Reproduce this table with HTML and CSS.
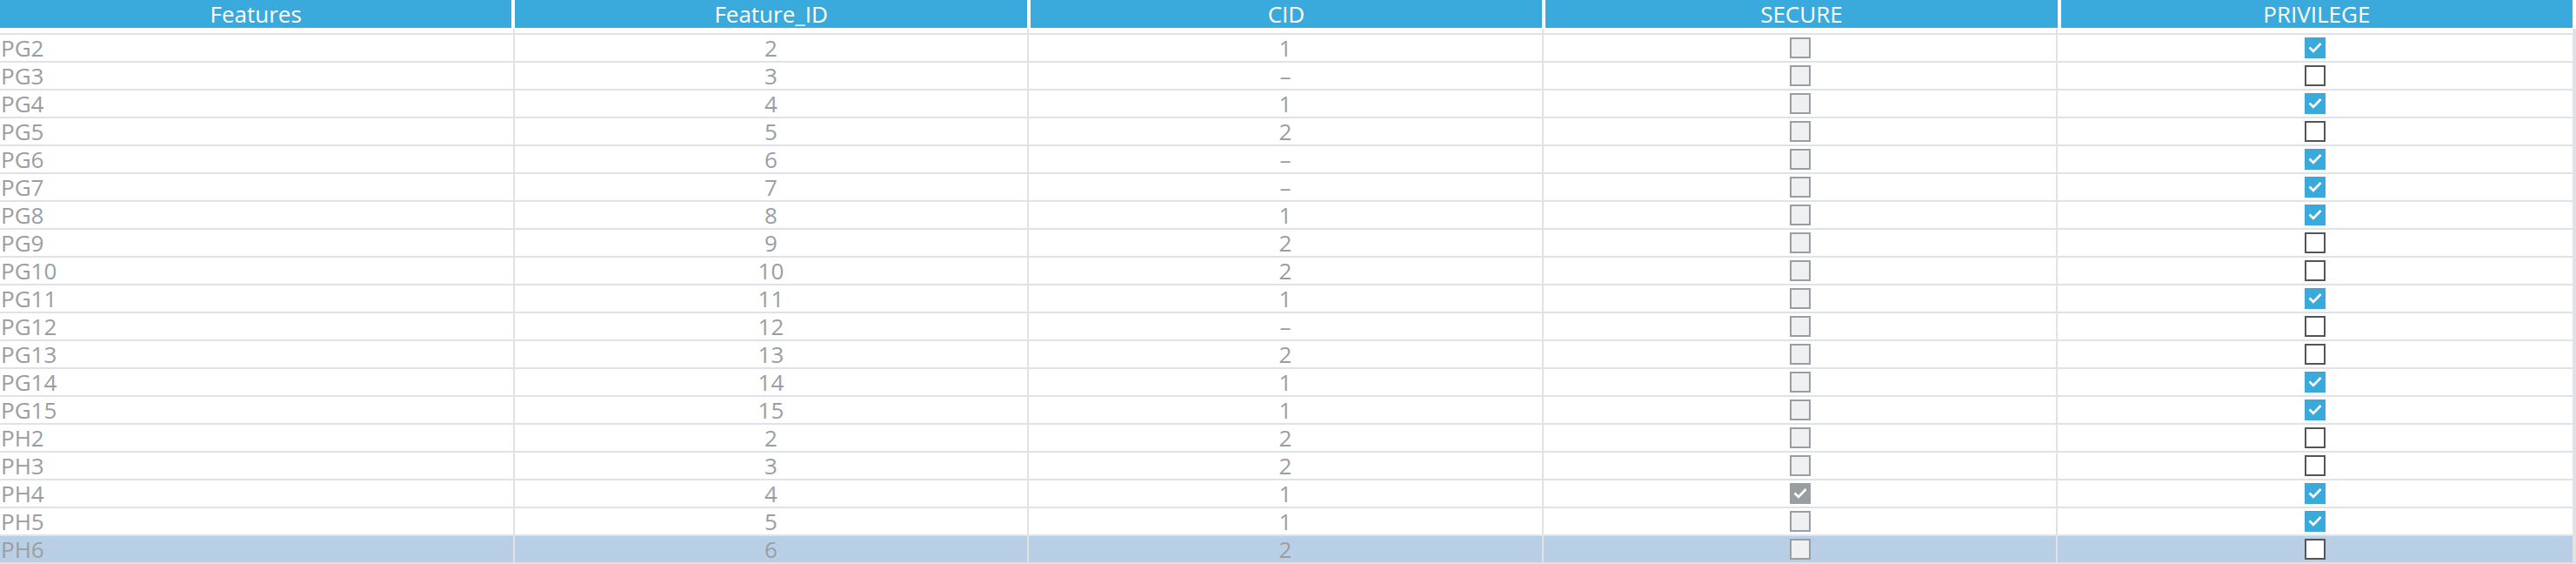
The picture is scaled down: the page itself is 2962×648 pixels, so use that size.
FILE: index.html
```html
<!DOCTYPE html>
<html>
<head>
<meta charset="utf-8">
<link rel="stylesheet" href="styles.css">
</head>
<body>
<div class="grid">
  <div class="head">
    <div class="hcell">Features</div>
    <div class="hcell">Feature_ID</div>
    <div class="hcell">CID</div>
    <div class="hcell">SECURE</div>
    <div class="hcell">PRIVILEGE</div>
  </div>
  <div class="body">
    <div class="row spacer"><div class="cell"></div><div class="cell"></div><div class="cell"></div><div class="cell"></div><div class="cell"></div></div>
    <div class="rows" id="rows"></div>
  </div>
</div>
<script src="app.js"></script>
</body>
</html>
```
FILE: app.js
```js
const data = [
  ["PG2","2","1",0,1],["PG3","3","–",0,0],["PG4","4","1",0,1],["PG5","5","2",0,0],
  ["PG6","6","–",0,1],["PG7","7","–",0,1],["PG8","8","1",0,1],["PG9","9","2",0,0],
  ["PG10","10","2",0,0],["PG11","11","1",0,1],["PG12","12","–",0,0],["PG13","13","2",0,0],
  ["PG14","14","1",0,1],["PG15","15","1",0,1],["PH2","2","2",0,0],["PH3","3","2",0,0],
  ["PH4","4","1",1,1],["PH5","5","1",0,1],["PH6","6","2",0,0]
];
const check = '<svg viewBox="0 0 24 24" width="24" height="24"><path d="M5.5 11.5 L10 16 L18.5 7" fill="none" stroke="#fff" stroke-width="2.6"/></svg>';
const rows = document.getElementById('rows');
rows.innerHTML = data.map((d, i) => {
  const sel = i === data.length - 1 ? ' selected' : '';
  const sec = d[3] ? '<span class="box sec on">' + check + '</span>' : '<span class="box sec"></span>';
  const pri = d[4] ? '<span class="box pri on">' + check + '</span>' : '<span class="box pri"></span>';
  return '<div class="row data' + sel + '">' +
    '<div class="cell left">' + d[0] + '</div>' +
    '<div class="cell">' + d[1] + '</div>' +
    '<div class="cell">' + d[2] + '</div>' +
    '<div class="cell">' + sec + '</div>' +
    '<div class="cell">' + pri + '</div></div>';
}).join('');
```
FILE: styles.css
```css
html, body {
  margin: 0;
  padding: 0;
  background: #fff;
}
body {
  font-family: "Open Sans", "Noto Sans", sans-serif;
  font-size: 26px;
  color: #9a9ea3;
}
.grid {
  width: 2962px;
}
.head {
  display: grid;
  grid-template-columns: repeat(5, 1fr);
  column-gap: 4px;
  width: 2958px;
  height: 32px;
  margin-bottom: 1px;
}
.hcell {
  background: #3aa9dc;
  color: #fff;
  text-align: center;
  line-height: 32px;
  white-space: nowrap;
}
.body {
  width: 2958px;
  border-right: 4px solid #dfe3e8;
}
.row {
  display: grid;
  grid-template-columns: repeat(5, 1fr);
}
.spacer {
  height: 5px;
}
.rows {
  border-top: 2px solid #dfe3e8;
}
.data {
  height: 30px;
  border-bottom: 2px solid #dfe3e8;
}
.data.selected {
  background: #b9cfe5;
}
.cell {
  border-right: 2px solid #dfe3e8;
  display: flex;
  align-items: center;
  justify-content: center;
  line-height: 30px;
  white-space: nowrap;
}
.row .cell:last-child {
  border-right: none;
}
.cell.left {
  justify-content: flex-start;
  padding-left: 1px;
}
.box {
  display: block;
  width: 24px;
  height: 24px;
  box-sizing: border-box;
  position: relative;
}
.box svg {
  position: absolute;
  left: 0;
  top: 0;
}
.box.sec {
  border: 2px solid #999ea3;
  background: #eff0f2;
}
.box.sec.on {
  border: none;
  background: #999ea3;
}
.box.pri {
  border: 2px solid #555;
  background: #fff;
}
.box.pri.on {
  border: none;
  background: #3aa9dc;
}
```
